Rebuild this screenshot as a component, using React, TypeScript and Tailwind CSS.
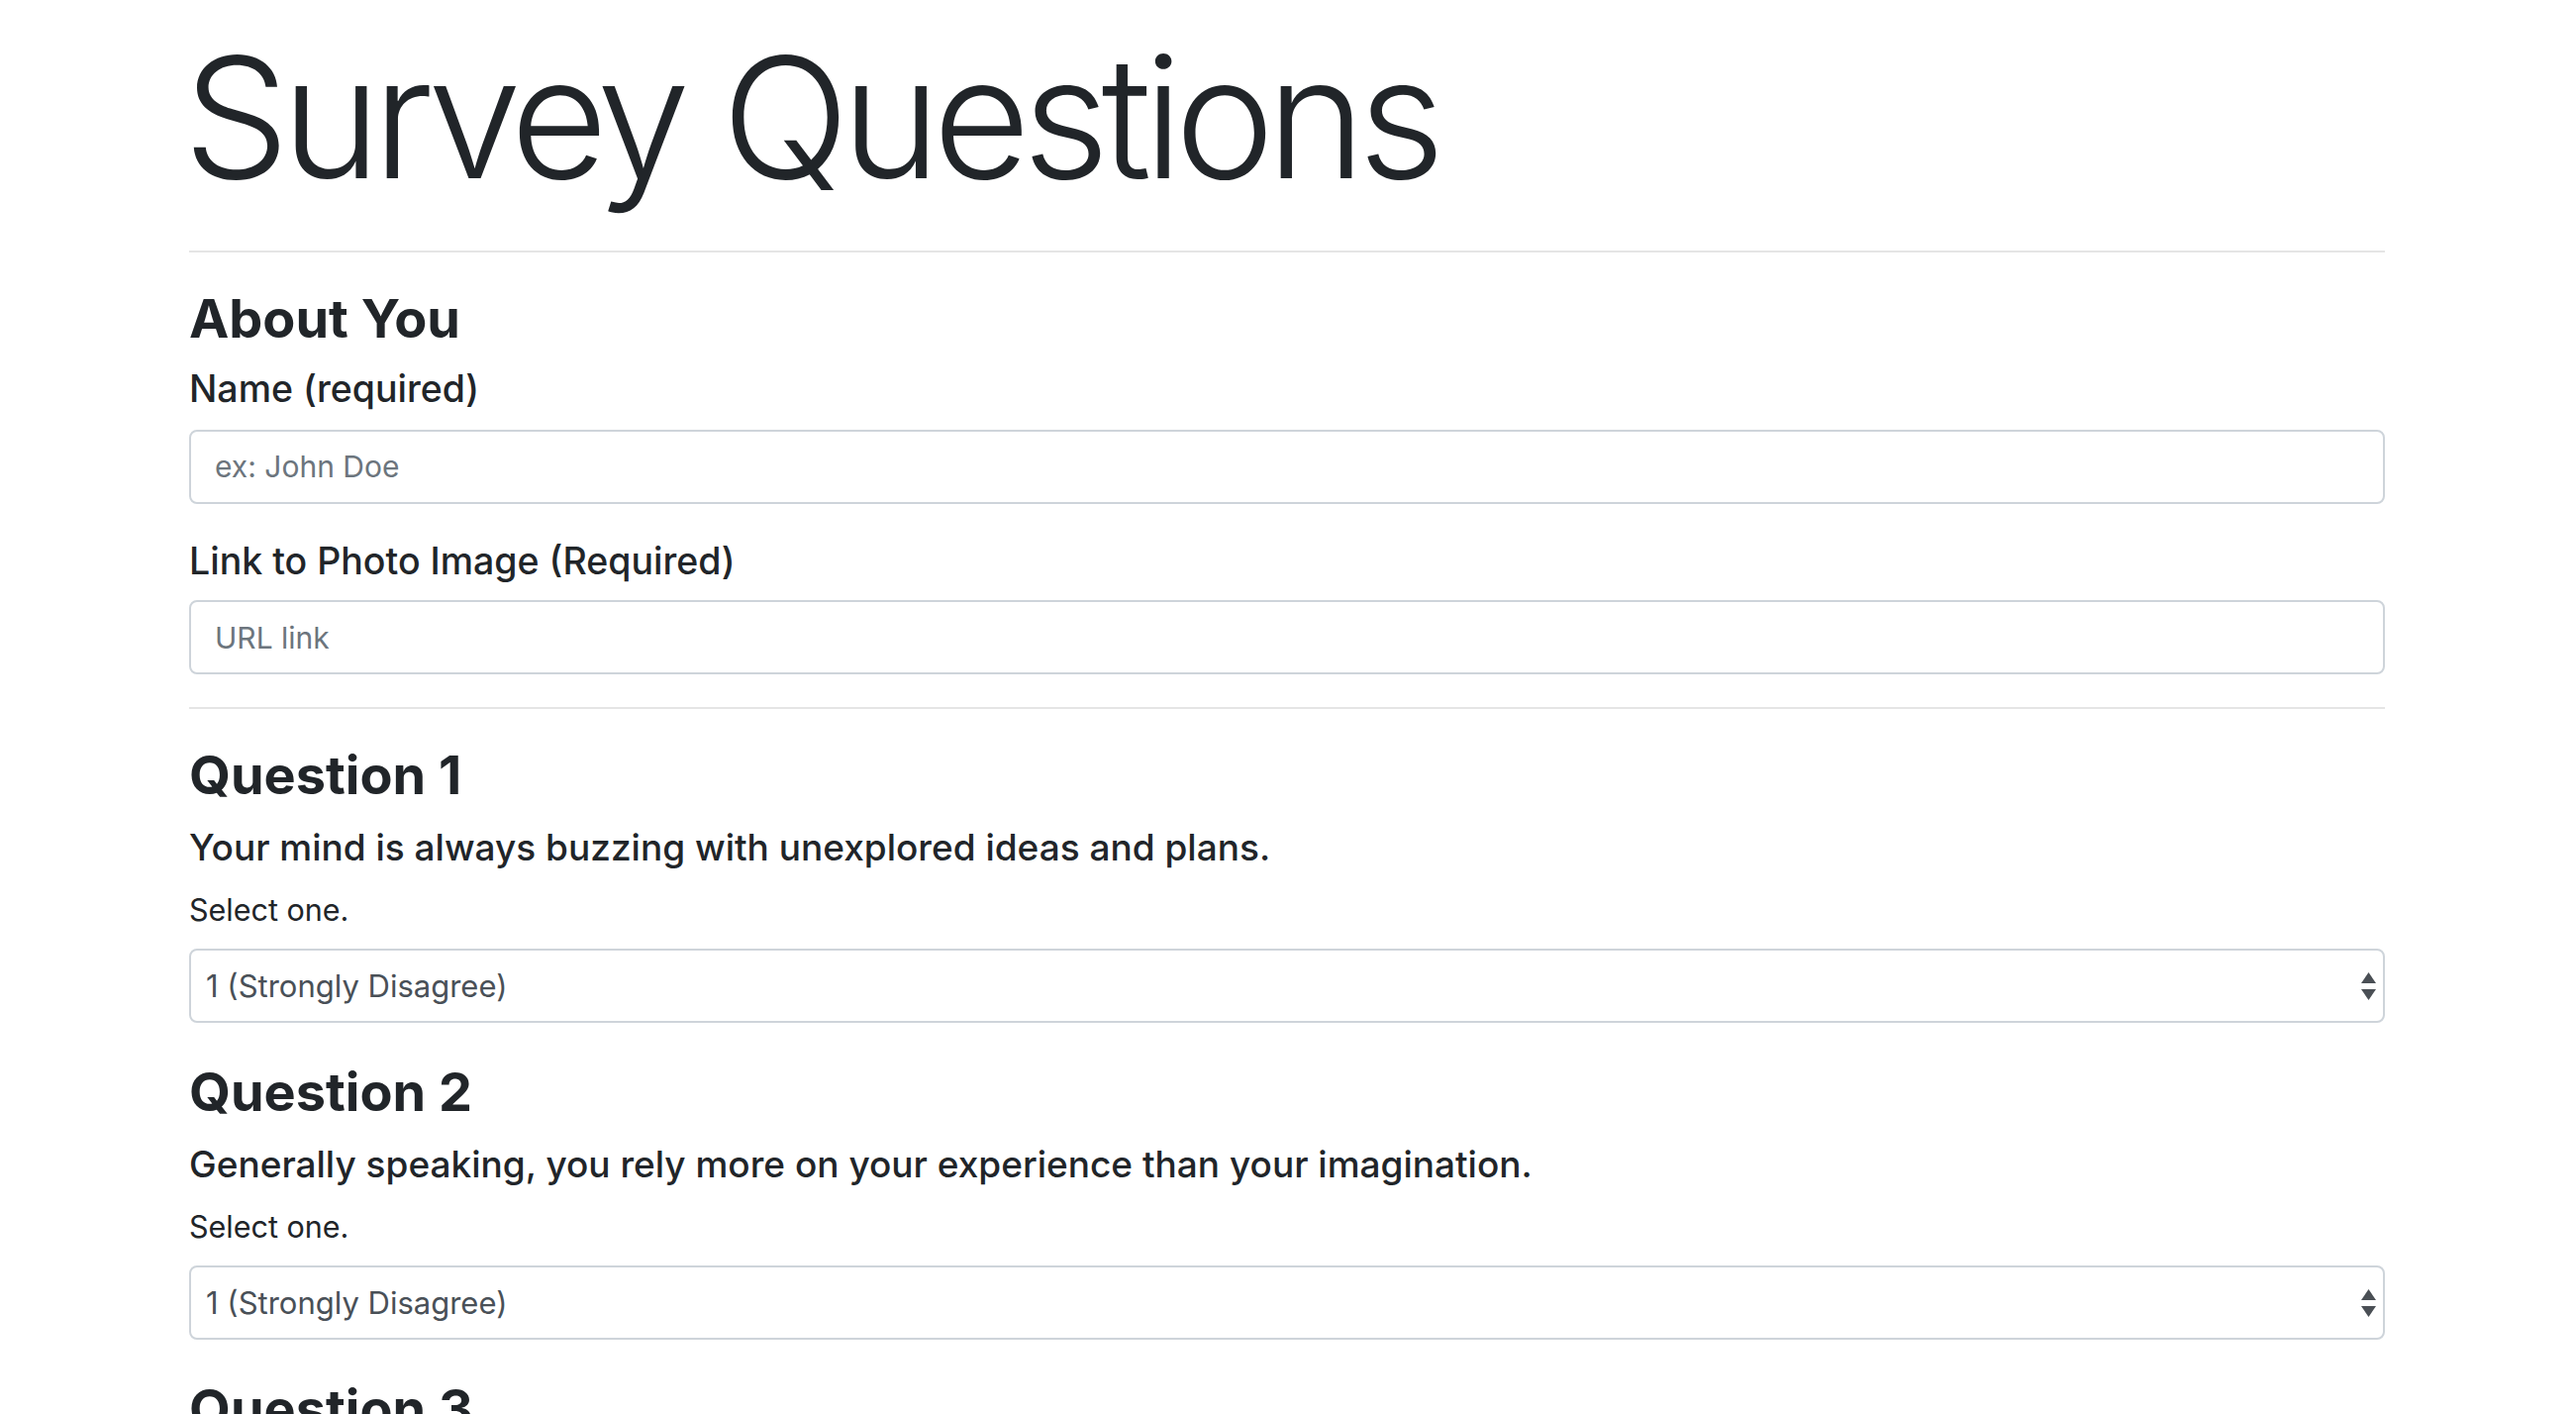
import React from "react";

const font = { fontFamily: "Inter, 'Noto Sans', 'Liberation Sans', sans-serif" };

function Arrows() {
  return (
    <svg width="15" height="28" viewBox="0 0 15 28" className="shrink-0">
      <polygon points="7.5,0 15,11 0,11" fill="#4a4f55" />
      <polygon points="0,17 15,17 7.5,28" fill="#4a4f55" />
    </svg>
  );
}

function SelectBox() {
  return (
    <div className="mt-[24px] h-[75px] rounded-[8px] border-2 border-[#ced4da] bg-white flex items-center justify-between pl-[15px] pr-[7px]">
      <span className="text-[31px] leading-none text-[#495057]">1 (Strongly Disagree)</span>
      <Arrows />
    </div>
  );
}

function Question({ n, text, first }: { n: number; text: string; first?: boolean }) {
  return (
    <div>
      <h3 className={first ? "mt-[40px] text-[54px] leading-[54px] font-bold" : "mt-[43px] text-[54px] leading-[54px] font-bold"}>
        Question {n}
      </h3>
      <p className="mt-[27px] text-[37px] leading-[37px] font-medium">{text}</p>
      <p className="mt-[30px] text-[30.5px] leading-[30px] font-normal">Select one.</p>
      <SelectBox />
    </div>
  );
}

export default function App() {
  return (
    <div className="h-[1428px] overflow-hidden bg-white" style={font}>
      <div className="ml-[191px] w-[2218px] text-[#212529]">
        <h1 className="mt-[33px] text-[170px] leading-[170px] font-light tracking-[-8px] -ml-[6px]">Survey Questions</h1>
        <div className="mt-[50px] h-[2px] bg-[#e5e5e5]" />
        <h3 className="mt-[40px] text-[54px] leading-[54px] font-bold">About You</h3>
        <div className="mt-[25px] text-[37.5px] leading-[37.5px] font-medium">Name (required)</div>
        <div className="mt-[22px] h-[75px] rounded-[8px] border-2 border-[#ced4da] bg-white flex items-center px-[24px]">
          <span className="text-[30px] leading-none text-[#6c757d]">ex: John Doe</span>
        </div>
        <div className="mt-[39px] text-[37.5px] leading-[37.5px] font-medium">Link to Photo Image (Required)</div>
        <div className="mt-[21px] h-[75px] rounded-[8px] border-2 border-[#ced4da] bg-white flex items-center px-[24px]">
          <span className="text-[30px] leading-none text-[#6c757d]">URL link</span>
        </div>
        <div className="mt-[33px] h-[2px] bg-[#e5e5e5]" />
        <Question n={1} first text="Your mind is always buzzing with unexplored ideas and plans." />
        <Question n={2} text="Generally speaking, you rely more on your experience than your imagination." />
        <Question n={3} text="You often feel overwhelmed." />
      </div>
    </div>
  );
}
